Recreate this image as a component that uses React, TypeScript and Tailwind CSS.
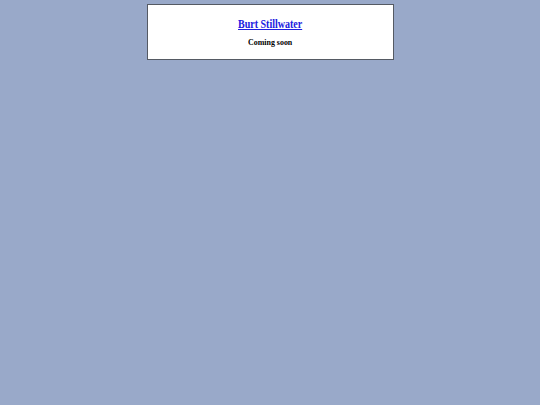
export default function App() {
  return (
    <div className="min-h-[405px] w-full bg-[#99a9c9] pt-[4px] font-['Liberation_Serif',serif]">
      <div className="mx-auto flex h-[56px] w-[247px] flex-col items-center border border-[#555a63] bg-white pt-[12px]">
        <a
          href="#"
          className="inline-block scale-x-[0.8] text-[12.5px] font-bold leading-[15px] text-[#2020e0] underline"
        >
          Burt Stillwater
        </a>
        <p className="mt-[5px] scale-x-[0.88] text-[9px] font-bold leading-[11px] text-black">Coming soon</p>
      </div>
    </div>
  );
}
